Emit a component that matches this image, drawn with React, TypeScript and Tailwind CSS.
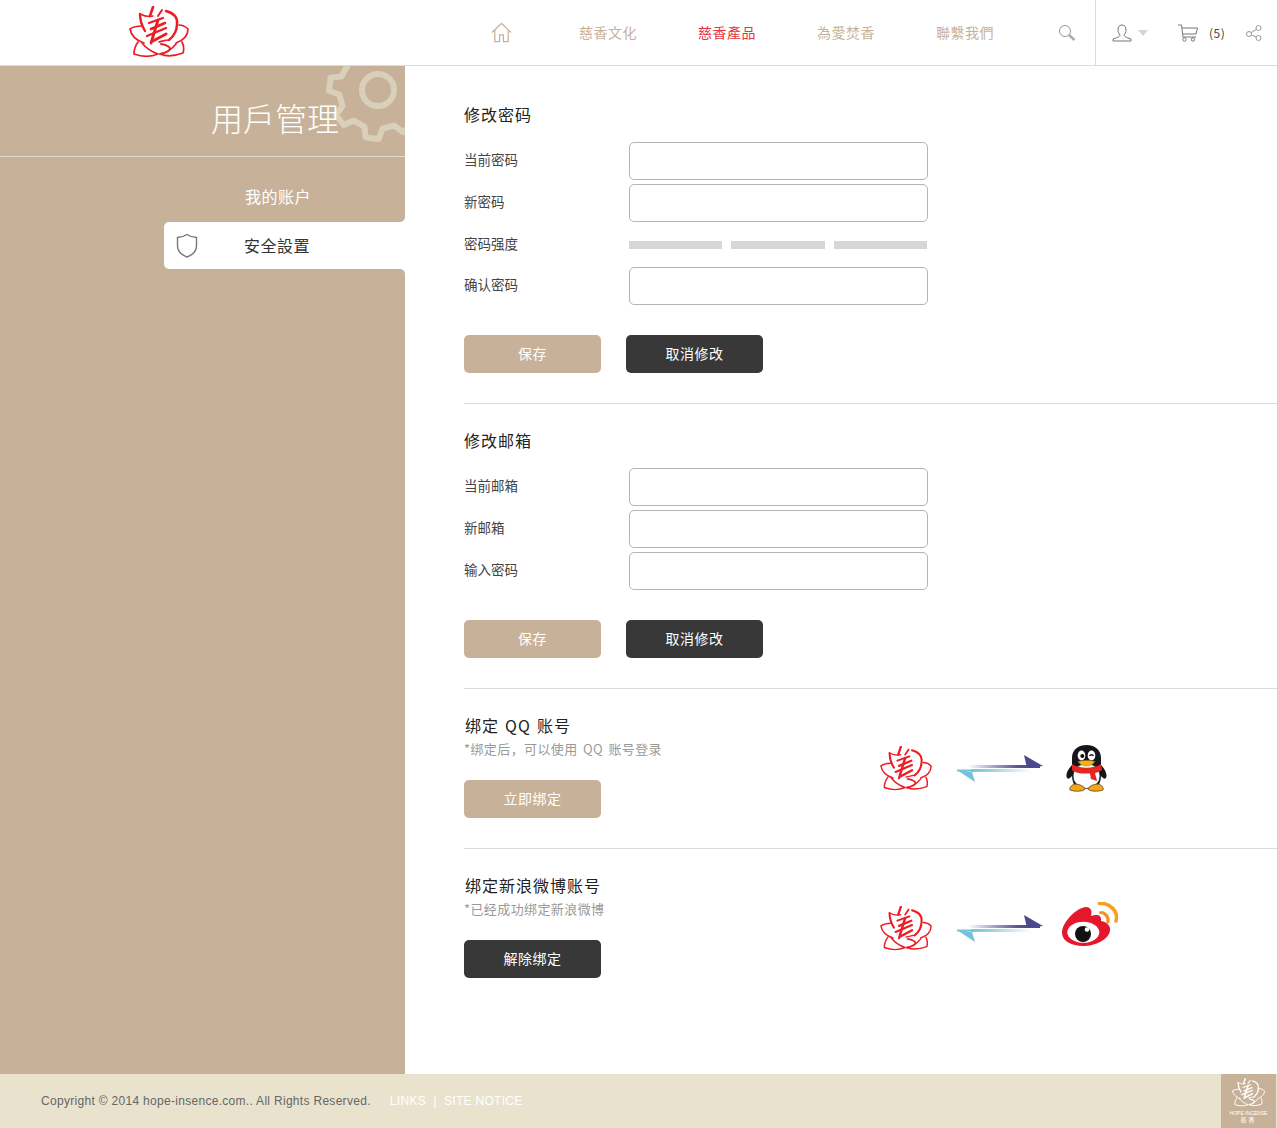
import { ReactNode } from 'react';

const gearPath = (() => {
  const cx = 100, cy = 100, teeth = 8, inner = 39, outer = 49;
  const parts: string[] = [];
  for (let i = 0; i < teeth; i++) {
    const a = ((Math.PI * 2) / teeth) * i + 0.12;
    const step = (Math.PI * 2) / teeth;
    const pts: [number, number][] = [
      [inner, a - step * 0.3],
      [outer, a - step * 0.17],
      [outer, a + step * 0.17],
      [inner, a + step * 0.3],
    ];
    pts.forEach(([r, t], j) => {
      const x = (cx + r * Math.cos(t)).toFixed(1);
      const y = (cy + r * Math.sin(t)).toFixed(1);
      parts.push(`${i === 0 && j === 0 ? 'M' : 'L'}${x} ${y}`);
    });
  }
  return parts.join(' ') + ' Z';
})();

function Lotus({ color, className }: { color: string; className?: string }) {
  return (
    <svg viewBox="0 0 60 52" className={className} fill="none" stroke={color} strokeWidth="1.7" strokeLinecap="round" strokeLinejoin="round">
      {/* outer petals */}
      <path d="M13 20C9 20 4 21 1 23C2 29 6 34 15 37" />
      <path d="M50 19C54 19 57 21 59 23C59 29 55 34 47 37" />
      {/* lower petals, closed towards the middle */}
      <path d="M9 36C6 40 5 44 5 48C13 51 22 51 29 48C23 46 17 42 13 37" />
      <path d="M53 36C55 40 55 44 54 47C46 50 38 51 31 48C37 47 43 43 47 38" />
      {/* upper petals */}
      <path d="M11 8C11 14 13 20 16 25" strokeWidth="2.4" />
      <path d="M11 8C15 10 20 11 24 10" strokeWidth="1.4" />
      <path d="M37 5C44 7 49 11 48 18C48 24 45 30 40 34" strokeWidth="2.4" />
      {/* top strokes */}
      <path d="M24 1L21 10" strokeWidth="2.6" />
      <path d="M33 4L29 10" strokeWidth="2" />
      {/* center brush strokes */}
      <path d="M20 17L34 12" strokeWidth="2.2" />
      <path d="M22 23L36 17" strokeWidth="2.6" />
      <path d="M18 30L37 22" strokeWidth="2.4" />
      <path d="M29 14L22 37" strokeWidth="2.8" />
      <path d="M24 35L37 28" strokeWidth="2.8" />
      <path d="M30 36C34 35 37 34 40 34" strokeWidth="1.6" />
      <path d="M32 38C37 39 41 41 41 43C40 46 36 47 31 48" strokeWidth="2" />
    </svg>
  );
}

function Arrows() {
  return (
    <svg viewBox="0 0 86 27" className="w-[86px] h-[27px]">
      <defs>
        <linearGradient id="arrow-top" x1="0" x2="1" y1="0" y2="0">
          <stop offset="0" stopColor="#4c4a8f" stopOpacity="0" />
          <stop offset="0.7" stopColor="#55538f" />
          <stop offset="1" stopColor="#4c4a8f" />
        </linearGradient>
        <linearGradient id="arrow-bottom" x1="0" x2="1" y1="0" y2="0">
          <stop offset="0" stopColor="#72c3da" />
          <stop offset="0.4" stopColor="#9fd6e4" />
          <stop offset="1" stopColor="#9fd6e4" stopOpacity="0" />
        </linearGradient>
      </defs>
      <rect x="11" y="10" width="72" height="3" fill="url(#arrow-top)" />
      <polygon points="67,0 86,11 70,13" fill="#4c4a8f" />
      <rect x="14" y="14" width="60" height="3" fill="url(#arrow-bottom)" />
      <polygon points="0,15 18,27 15,17" fill="#72c3da" />
      <rect x="0" y="14.5" width="16" height="2" fill="#72c3da" />
    </svg>
  );
}

function Penguin() {
  return (
    <svg viewBox="0 0 41 47" className="w-[41px] h-[47px]">
      <path d="M1 33C-1 29 3 23 6 20L6 13C6 4 13 0 20.5 0C28 0 35 4 35 13L35 20C38 23 42 29 40 33C38 35 36 32 35 31C35 36 33 40 31 42L10 42C8 40 6 36 6 31C5 32 3 35 1 33Z" fill="#15161c" />
      <ellipse cx="20.5" cy="31" rx="13.5" ry="12.5" fill="#fff" stroke="#222" strokeWidth="0.8" />
      <ellipse cx="15.5" cy="10.5" rx="3.8" ry="5" fill="#fff" />
      <ellipse cx="25.5" cy="10.5" rx="3.8" ry="5" fill="#fff" />
      <circle cx="16.3" cy="11" r="2" fill="#111" />
      <path d="M23.5 11C24.5 9.3 26.5 9.3 27.5 11" stroke="#111" strokeWidth="1.3" fill="none" />
      <path d="M12 16.5C16 15 25 15 29 16.5C27 19.5 24 21 20.5 21C17 21 14 19.5 12 16.5Z" fill="#f6b21b" stroke="#a56b08" strokeWidth="0.5" />
      <path d="M6 19C13 24 28 24 35 19L36 25C33 27 30 28 29 28L31 36L25 34L24 28.5C16 29 9 28 6 25Z" fill="#e5261f" />
      <path d="M9 39C14 39 19 42 19 44C18 46.5 9 47 4 45C3 43 5 40 9 39Z" fill="#f6a511" stroke="#222" strokeWidth="0.6" />
      <path d="M32 39C27 39 22 42 22 44C23 46.5 32 47 37 45C38 43 36 40 32 39Z" fill="#f6a511" stroke="#222" strokeWidth="0.6" />
    </svg>
  );
}

function Weibo() {
  return (
    <svg viewBox="0 0 56 45" className="w-[56px] h-[45px]">
      <path d="M0 31C0 22 10 10 20 6C27 3 31 7 29 14C35 12 40 13 39 19C45 20 49 24 48 29C46 38 33 44 21 44C10 44 0 39 0 31Z" fill="#e6162d" />
      <ellipse cx="21.3" cy="30.3" rx="16" ry="10.5" fill="#fff" />
      <circle cx="21" cy="32" r="8" fill="#111" />
      <circle cx="25" cy="27.5" r="2.3" fill="#fff" />
      <path d="M38.7 10.5C43 10.5 47 15 46 20" fill="none" stroke="#f6921e" strokeWidth="3.2" strokeLinecap="round" />
      <path d="M37.5 1.5C47 0.5 57 9 54 19" fill="none" stroke="#f6a01e" strokeWidth="3.6" strokeLinecap="round" />
    </svg>
  );
}

function TextField({ label }: { label: string }) {
  return (
    <div className="flex items-center h-[38px]">
      <label className="w-[165px] pb-[3px] text-[13.5px] text-[#444]">{label}</label>
      <input type="text" className="w-[299px] h-[38px] bg-white border border-[#b5b5b5] rounded-[5px] outline-none" />
    </div>
  );
}

function Btn({ dark, children }: { dark?: boolean; children: ReactNode }) {
  return (
    <button className={`w-[137px] h-[38px] pb-[2px] rounded-[5px] text-sm tracking-[0.5px] ${dark ? 'bg-[#383838] text-white' : 'bg-[#c7b299] text-white'}`}>
      {children}
    </button>
  );
}

function FormButtons() {
  return (
    <div className="flex gap-[25px]">
      <Btn>保存</Btn>
      <Btn dark>取消修改</Btn>
    </div>
  );
}

function BindRow({ title, note, action, dark, logo }: { title: string; note: string; action: string; dark?: boolean; logo: ReactNode }) {
  return (
    <div className="flex pt-[25px] h-[159px]">
      <div className="w-[416px]">
        <h3 className="text-base leading-[22px] tracking-[1px] [word-spacing:1.5px] text-[#222] pl-px">{title}</h3>
        <p className="mt-[2px] text-[13px] leading-[22px] tracking-[0.4px] [word-spacing:2px] text-[#999]">{note}</p>
        <div className="mt-[20px]">
          <Btn dark={dark}>{action}</Btn>
        </div>
      </div>
      <div className="flex items-center h-[60px] mt-[24px]">{logo}</div>
    </div>
  );
}

const navItems = ['慈香文化', '慈香產品', '為愛焚香', '聯繫我們'];

export default function App() {
  return (
    <div className="w-[1277px] h-[1128px] flex flex-col bg-white font-['Noto_Sans_CJK_SC','Noto_Sans_CJK_TC',sans-serif]">
      <header className="h-[66px] shrink-0 flex items-center border-b border-[#dcdcdc]">
        <div className="w-[491px] pl-[129px]">
          <Lotus color="#ed1c24" className="w-[60px] h-[52px] -mt-[1px]" />
        </div>
        <nav className="flex items-center">
          <svg viewBox="0 0 22 22" className="w-[21px] h-[21px] mr-[67px]" fill="none" stroke="#c7b299" strokeWidth="1.3">
            <path d="M1 11L11 1.5L21 11M4 9V20.5H9V13.5H13V20.5H18V9" />
          </svg>
          <div className="flex gap-[61px] pb-[2px]">
            {navItems.map((item) => (
              <a key={item} className={`text-sm tracking-[0.5px] ${item === '慈香產品' ? 'text-[#e8343f]' : 'text-[#c7b299]'}`}>
                {item}
              </a>
            ))}
          </div>
          <svg viewBox="0 0 18 18" className="w-[18px] h-[18px] ml-[64px]" fill="none" stroke="#999" strokeWidth="1">
            <circle cx="7" cy="7" r="5.5" />
            <path d="M11 11L16.5 16" strokeWidth="2.4" stroke="#aaa" />
          </svg>
        </nav>
        <div className="h-full ml-[19px] border-l border-[#dcdcdc] flex items-center pl-4">
          <svg viewBox="0 0 20 18" className="w-5 h-[18px]" fill="none" stroke="#777" strokeWidth="1">
            <path d="M10 1C7 1 6 3 6 6C6 8 7 10 8 11C8 12 7 13 1 15V17H19V15C13 13 12 12 12 11C13 10 14 8 14 6C14 3 13 1 10 1Z" />
          </svg>
          <span className="ml-[6px] w-0 h-0 border-x-[5.5px] border-x-transparent border-t-[6px] border-t-[#d5d5d5]" />
          <svg viewBox="0 0 20 18" className="w-5 h-[18px] ml-[30px]" fill="none" stroke="#777" strokeWidth="1">
            <path d="M0 1H3.5L5 13H18M4 4H19.5L18 10H5" />
            <circle cx="6.5" cy="15.5" r="1.7" />
            <circle cx="15" cy="15.5" r="1.7" />
          </svg>
          <span className="ml-[11px] w-[15px] text-xs text-[#444] tracking-[0.5px] whitespace-nowrap">(5)</span>
          <svg viewBox="0 0 16 16" className="w-4 h-4 ml-[22px]" fill="none" stroke="#999" strokeWidth="1">
            <circle cx="12.5" cy="3" r="2.5" />
            <circle cx="3" cy="9" r="2.5" />
            <circle cx="12.5" cy="13" r="2.5" />
            <path d="M5 7.7L10.4 4.3M5.2 10L10.2 12" />
          </svg>
        </div>
      </header>

      <div className="flex flex-1 min-h-0">
        <aside className="w-[405px] shrink-0 flex flex-col bg-white">
          <div className="h-[156px] bg-[#c7b299] rounded-br-[5px] flex flex-col">
            <div className="relative overflow-hidden h-[91px] flex items-end justify-end border-b border-[#e3d9c9] pr-[66px] pb-[19px]">
              <svg viewBox="0 0 200 200" className="absolute left-[278px] top-[-76px] w-[200px] h-[200px]" fill="none" stroke="#d9cfba" strokeWidth="6" strokeLinejoin="round">
                <path d={gearPath} />
                <circle cx="100" cy="100" r="16" />
              </svg>
              <h1 className="relative text-[32px] leading-[40px] font-light text-white">用戶管理</h1>
            </div>
            <div className="h-[64px] flex items-center pl-[245px] pt-[14px] text-base tracking-[0.5px] text-white">我的账户</div>
          </div>
          <div className="h-[47px] flex bg-[#c7b299]">
            <div className="w-[164px]" />
            <div className="flex-1 bg-white rounded-l-[5px] flex items-center pl-[12px]">
              <svg viewBox="0 0 22 25" className="w-[22px] h-[25px] -mt-[1px]" fill="none" stroke="#777" strokeWidth="1.4">
                <path d="M11 1.5C8 3.5 5 4.5 1.5 4.5V13C1.5 18 6 22 11 24C16 22 20.5 18 20.5 13V4.5C17 4.5 14 3.5 11 1.5Z" />
              </svg>
              <span className="ml-[46px] pb-[2px] text-base tracking-[0.5px] text-[#333]">安全設置</span>
            </div>
          </div>
          <div className="flex-1 bg-[#c7b299] rounded-tr-[5px]" />
        </aside>

        <main className="flex-1 pl-[59px]">
          <section className="pt-[36px] h-[338px] border-b border-[#dcdcdc]">
            <h2 className="text-base leading-6 tracking-[1px] text-[#222] mb-[16px]">修改密码</h2>
            <div className="flex flex-col gap-1">
              <TextField label="当前密码" />
              <TextField label="新密码" />
            </div>
            <div className="flex items-center h-[45px]">
              <span className="w-[165px] pb-[2px] text-[13.5px] text-[#444]">密码强度</span>
              <div className="flex gap-[9px] w-[298px]">
                <div className="flex-1 h-2 bg-[#d6d6d6]" />
                <div className="flex-1 h-2 bg-[#d6d6d6]" />
                <div className="flex-1 h-2 bg-[#d6d6d6]" />
              </div>
            </div>
            <TextField label="确认密码" />
            <div className="mt-[30px]">
              <FormButtons />
            </div>
          </section>

          <section className="pt-[24px] h-[285px] border-b border-[#dcdcdc]">
            <h2 className="text-base leading-6 tracking-[1px] text-[#222] mb-[16px]">修改邮箱</h2>
            <div className="flex flex-col gap-1">
              <TextField label="当前邮箱" />
              <TextField label="新邮箱" />
              <TextField label="输入密码" />
            </div>
            <div className="mt-[30px]">
              <FormButtons />
            </div>
          </section>

          <div className="border-b border-[#dcdcdc]">
            <BindRow
              title="绑定 QQ 账号"
              note="*绑定后，可以使用 QQ 账号登录"
              action="立即绑定"
              logo={
                <div className="flex items-center">
                  <Lotus color="#ed1c24" className="w-[52px] h-[45px]" />
                  <div className="ml-[25px]"><Arrows /></div>
                  <div className="ml-[23px]"><Penguin /></div>
                </div>
              }
            />
          </div>
          <BindRow
            title="绑定新浪微博账号"
            note="*已经成功绑定新浪微博"
            action="解除绑定"
            dark
            logo={
              <div className="flex items-center">
                <Lotus color="#ed1c24" className="w-[52px] h-[45px]" />
                <div className="ml-[25px]"><Arrows /></div>
                <div className="ml-[19px] mb-2"><Weibo /></div>
              </div>
            }
          />
        </main>
      </div>

      <footer className="h-[54px] shrink-0 flex items-center bg-[#e9e3ce] pl-[41px] pr-px font-['Liberation_Sans',sans-serif] text-xs tracking-[0.3px]">
        <span className="text-[#666]">Copyright © 2014 hope-insence.com.. All Rights Reserved.</span>
        <span className="ml-[19px] text-white">LINKS&nbsp;&nbsp;|&nbsp;&nbsp;SITE NOTICE</span>
        <div className="ml-auto w-[55px] h-full bg-[#c7b299] flex flex-col items-center pt-[4px] tracking-normal">
          <Lotus color="#ffffff" className="w-[33px] h-[29px]" />
          <span className="mt-[3px] text-[5px] leading-[6px] text-white whitespace-nowrap">HOPE INCENSE</span>
          <span className="text-[6px] leading-[8px] tracking-[2px] text-white font-['Noto_Sans_CJK_TC',sans-serif]">慈香</span>
        </div>
      </footer>
    </div>
  );
}
